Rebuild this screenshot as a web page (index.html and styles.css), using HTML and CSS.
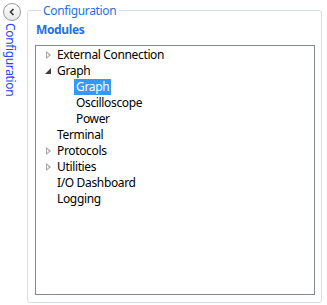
FILE: index.html
```html
<!DOCTYPE html>
<html lang="en">
<head>
  <meta charset="UTF-8" />
  <title>Configuration</title>
  <link rel="stylesheet" href="styles.css">
</head>
<body>

  <!-- Collapsed side header -->
  <div class="side">
    <button class="collapse-btn">
      <svg width="8" height="8" viewBox="0 0 8 8"><path d="M5.5 1 L2.5 4 L5.5 7" fill="none" stroke="#333" stroke-width="1.6"/></svg>
    </button>
    <div class="side-title">Configuration</div>
  </div>

  <!-- Group box -->
  <fieldset class="group">
    <legend>Configuration</legend>
    <div class="section">Modules</div>
    <div class="tree">
      <div class="row"><span class="exp closed"></span><span class="label">External Connection</span></div>
      <div class="row"><span class="exp open"></span><span class="label">Graph</span></div>
      <div class="row child"><span class="label selected">Graph</span></div>
      <div class="row child"><span class="label">Oscilloscope</span></div>
      <div class="row child"><span class="label">Power</span></div>
      <div class="row"><span class="exp"></span><span class="label">Terminal</span></div>
      <div class="row"><span class="exp closed"></span><span class="label">Protocols</span></div>
      <div class="row"><span class="exp closed"></span><span class="label">Utilities</span></div>
      <div class="row"><span class="exp"></span><span class="label">I/O Dashboard</span></div>
      <div class="row"><span class="exp"></span><span class="label">Logging</span></div>
    </div>
  </fieldset>

</body>
</html>
```

FILE: styles.css
```css
body {
  margin: 0;
  padding: 0;
  background: #fff;
  font-family: "Noto Sans", "Liberation Sans", sans-serif;
  font-size: 12px;
  letter-spacing: -0.35px;
  display: flex;
  height: 305px;
  overflow: hidden;
}

.side {
  width: 27px;
  display: flex;
  flex-direction: column;
  align-items: flex-start;
}

.collapse-btn {
  margin: 3px 0 0 3px;
  width: 18px;
  height: 18px;
  padding: 0;
  border: 1px solid #9a9a9a;
  border-radius: 50%;
  background: linear-gradient(#fdfdfd, #e8e8e8);
  display: flex;
  align-items: center;
  justify-content: center;
}

.side-title {
  writing-mode: vertical-rl;
  color: #2346f0;
  margin: 2px 0 0 3px;
  line-height: 14px;
}

.group {
  margin: 3px 0 3px 0;
  width: 295px;
  padding: 0 6px 7px 7px;
  border: 1px solid #d5dfe5;
  border-radius: 3px;
  box-sizing: border-box;
  height: 300px;
  display: flex;
  flex-direction: column;
}

.group legend {
  color: #1e72e0;
  padding: 0 2px;
  margin-left: 6px;
  line-height: 15px;
}

.section {
  color: #1e72e0;
  font-weight: bold;
  line-height: 16px;
  margin: 4px 0 7px 1px;
}

.tree {
  flex: 1;
  border: 1px solid #828790;
  padding: 1px 0;
}

.row {
  height: 16px;
  display: flex;
  align-items: center;
  color: #000;
}

.exp {
  width: 21px;
  height: 16px;
  position: relative;
  flex: none;
}

.exp.closed::before {
  content: "";
  position: absolute;
  left: 10px;
  top: 4px;
  border-left: 5px solid #a6a6a6;
  border-top: 4px solid transparent;
  border-bottom: 4px solid transparent;
}

.exp.closed::after {
  content: "";
  position: absolute;
  left: 11px;
  top: 6px;
  border-left: 2px solid #fff;
  border-top: 2px solid transparent;
  border-bottom: 2px solid transparent;
}

.exp.open::before {
  content: "";
  position: absolute;
  left: 9px;
  top: 5px;
  border-right: 6px solid #3c3c3c;
  border-top: 6px solid transparent;
}

.row.child {
  padding-left: 40px;
}

.label {
  line-height: 16px;
}

.label.selected {
  background: #3399ff;
  color: #fff;
  padding: 0 2px;
  margin-left: -2px;
}
```
